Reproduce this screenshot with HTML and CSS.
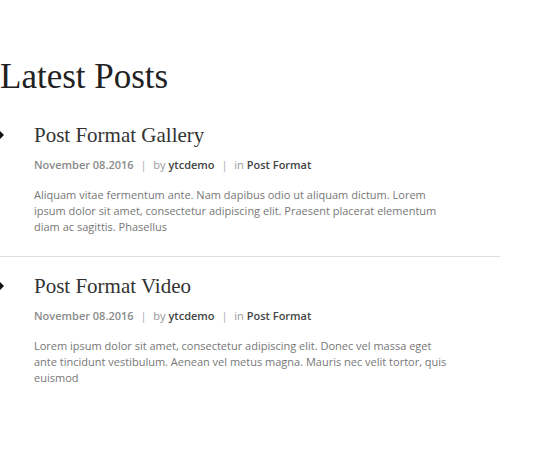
FILE: index.html
```html
<!DOCTYPE html>
<html lang="en">
<head>
  <meta charset="UTF-8">
  <meta name="viewport" content="width=device-width, initial-scale=1.0">
  <link rel="stylesheet" href="styles.css">
  <title>Latest Posts</title>
</head>
<body>

  <div id="widget-latest">
    <h2 class="widget-title">Latest Posts</h2>

    <ul class="post-list">
      <li class="post">
        <span class="marker"></span>
        <div class="post-body">
          <h3 class="post-title"><a href="#">Post Format Gallery</a></h3>
          <div class="post-meta">
            <span class="date">November 08.2016</span>
            <span class="sep">|</span>
            <span class="by">by <a href="#">ytcdemo</a></span>
            <span class="sep">|</span>
            <span class="in">in <a href="#">Post Format</a></span>
          </div>
          <p class="excerpt">Aliquam vitae fermentum ante. Nam dapibus odio ut aliquam dictum. Lorem ipsum dolor sit amet, consectetur adipiscing elit. Praesent placerat elementum diam ac sagittis. Phasellus</p>
        </div>
      </li>

      <li class="post">
        <span class="marker"></span>
        <div class="post-body">
          <h3 class="post-title"><a href="#">Post Format Video</a></h3>
          <div class="post-meta">
            <span class="date">November 08.2016</span>
            <span class="sep">|</span>
            <span class="by">by <a href="#">ytcdemo</a></span>
            <span class="sep">|</span>
            <span class="in">in <a href="#">Post Format</a></span>
          </div>
          <p class="excerpt">Lorem ipsum dolor sit amet, consectetur adipiscing elit. Donec vel massa eget ante tincidunt vestibulum. Aenean vel metus magna. Mauris nec velit tortor, quis euismod</p>
        </div>
      </li>
    </ul>
  </div>

</body>
</html>
```

FILE: styles.css
```css
body {
  margin: 0;
  padding: 0;
  background-color: #fff;
  font-family: "Open Sans", "Liberation Sans", sans-serif;
}

#widget-latest {
  width: 500px;
  padding-top: 57px;
}

.widget-title {
  margin: 0;
  font-family: "Liberation Serif", "DejaVu Serif", serif;
  font-weight: normal;
  font-size: 35px;
  line-height: 40px;
  color: #222;
}

.post-list {
  list-style: none;
  margin: 25px 0 0 0;
  padding: 0;
}

.post {
  display: grid;
  grid-template-columns: 34px 1fr;
  padding-right: 44px;
  padding-bottom: 21px;
  border-bottom: 1px solid #ddd;
  margin-bottom: 16px;
}

.post:last-child {
  border-bottom: none;
}

.marker {
  width: 0;
  height: 0;
  margin-top: 9px;
  border-top: 4px solid transparent;
  border-bottom: 4px solid transparent;
  border-left: 4px solid #111;
}

.post-title {
  margin: 0;
  font-family: "Liberation Serif", "DejaVu Serif", serif;
  font-weight: normal;
  font-size: 21px;
  line-height: 26px;
}

.post-title a {
  color: #333;
  text-decoration: none;
}

.post-meta {
  margin-top: 8px;
  font-size: 11px;
  line-height: 18px;
  color: #999;
}

.post-meta .date {
  font-weight: 600;
  color: #8a8a8a;
}

.post-meta .sep {
  padding: 0 4px;
  color: #aaa;
}

.post-meta a {
  color: #444;
  font-weight: 600;
  text-decoration: none;
}

.excerpt {
  margin: 13px 0 0 0;
  font-size: 11px;
  line-height: 16px;
  color: #777;
}
```
